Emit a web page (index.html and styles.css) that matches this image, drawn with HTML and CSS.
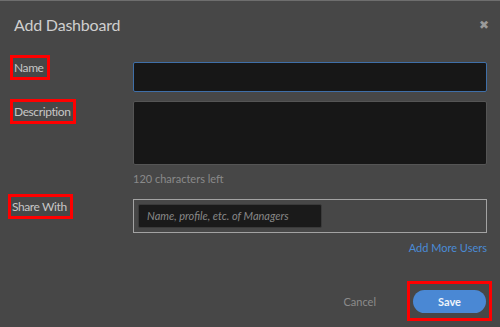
FILE: index.html
```html
<!DOCTYPE html>
<html>
<head>
<meta charset="utf-8">
<link rel="stylesheet" href="styles.css">
</head>
<body>
<div class="dialog">
  <div class="header">
    <h1 class="title">Add Dashboard</h1>
    <span class="close">&#x2716;</span>
  </div>
  <div class="form">
    <div class="row row-name">
      <div class="label-col"><span class="label">Name</span></div>
      <div class="field-col"><div class="input input-focus"></div></div>
    </div>
    <div class="row row-desc">
      <div class="label-col"><span class="label">Description</span></div>
      <div class="field-col">
        <div class="textarea"></div>
        <div class="hint">120 characters left</div>
      </div>
    </div>
    <div class="row row-share">
      <div class="label-col"><span class="label">Share With</span></div>
      <div class="field-col">
        <div class="share-box">
          <div class="share-input">Name, profile, etc. of Managers</div>
        </div>
        <div class="add-more"><a class="link">Add More Users</a></div>
      </div>
    </div>
  </div>
  <div class="footer">
    <span class="cancel">Cancel</span>
    <span class="save-wrap"><span class="save">Save</span></span>
  </div>
</div>
</body>
</html>
```
FILE: styles.css
```css
* { box-sizing: border-box; }
html, body { margin: 0; padding: 0; }
body {
  width: 500px;
  height: 327px;
  background: #474747;
  font-family: "Lato", "Open Sans", sans-serif;
  color: #c9c9c9;
  overflow: hidden;
}
.dialog {
  height: 327px;
  border-top: 1px solid #6e6e6e;
  padding: 0 13px 0 10px;
}
.header {
  display: flex;
  justify-content: space-between;
  align-items: center;
  height: 47px;
  padding-left: 4px;
}
.title {
  margin: 0;
  font-size: 16px;
  font-weight: 400;
  color: #cfcfcf;
  letter-spacing: -0.2px;
}
.close {
  font-size: 12px;
  color: #9a9a9a;
  margin-right: -2px;
  margin-top: -1px;
}
.form { display: flex; flex-direction: column; gap: 7px; padding-top: 7px; }
.row { display: flex; align-items: flex-start; }
.label-col { width: 123px; flex: none; }
.field-col { flex: 1; }
.label {
  display: inline-block;
  border: 3px solid #ff0000;
  font-size: 12px;
  line-height: 15px;
  letter-spacing: -0.4px;
  padding: 2px 3px 2px 1px;
  color: #c6c6c6;
}
.input {
  margin-top: 7px;
  height: 30px;
  background: #171717;
  border: 1px solid #5a5a5a;
  border-radius: 2px;
}
.input-focus { border-color: #3f6fa8; }
.textarea {
  margin-top: 2px;
  height: 64px;
  background: #171717;
  border: 1px solid #555;
  border-radius: 2px;
}
.hint {
  margin-top: 7px;
  font-size: 11px;
  line-height: 14px;
  color: #8a8a8a;
}
.row-share { margin-top: 1px; }
.row-share .label-col { margin-left: -2px; margin-right: 2px; }
.share-box {
  margin-top: 5px;
  height: 34px;
  border: 1px solid #a3a3a3;
  padding: 4px 4px;
}
.share-input {
  width: 184px;
  height: 24px;
  background: #1a1a1a;
  border: 1px solid #3a3a3a;
  border-radius: 2px;
  font-size: 11px;
  font-style: italic;
  color: #888;
  line-height: 22px;
  padding-left: 8px;
}
.add-more {
  text-align: right;
  margin-top: 8px;
  font-size: 11px;
  line-height: 14px;
}
.link { color: #4a8bd6; }
.footer {
  display: flex;
  justify-content: flex-end;
  align-items: center;
  margin-top: 26px;
  margin-right: -5px;
}
.cancel {
  font-size: 11px;
  color: #8c8c8c;
  margin-right: 31px;
}
.save-wrap {
  display: inline-block;
  border: 3px solid #ff0000;
  padding: 6px 3px 5px 3px;
}
.save {
  display: block;
  width: 73px;
  height: 23px;
  line-height: 23px;
  border-radius: 12px;
  background: #4a88d4;
  color: #eef3fa;
  font-size: 11px;
  font-weight: 700;
  text-align: center;
}
```
